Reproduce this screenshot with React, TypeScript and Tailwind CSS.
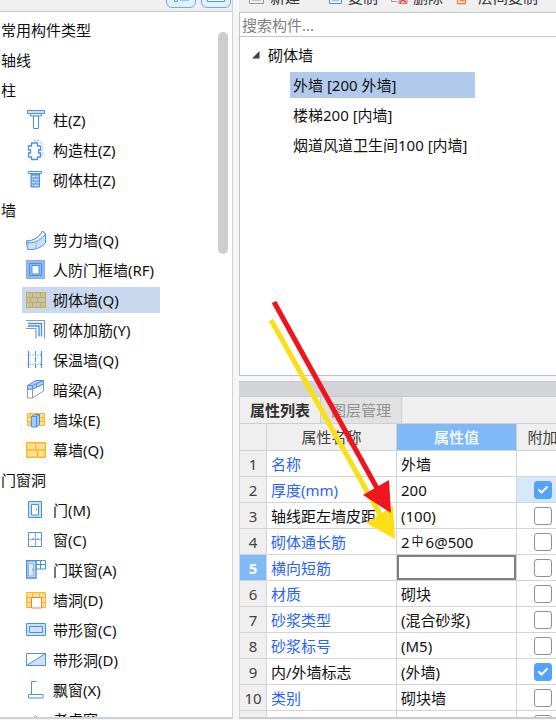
import { Check } from 'lucide-react'
import clsx from 'clsx'
import { Fragment, ReactNode, useState } from 'react'

const BLUE = '#4a90e2'
const PALE = '#cfe1f7'
const GOLD = '#fbb62a'
const SAND = '#ffdf94'

const icons: Record<string, ReactNode> = {
  column: (
    <g fill="#fff" stroke={BLUE}>
      <path d="M1.500 .5h17v3h-17z" fill={PALE} />
      <path d="M4.500 3.500h11v2.500h-11z" />
      <path d="M7.500 6h5v12.500h-5z" />
    </g>
  ),
  tieColumn: (
    <g fill="none" stroke={BLUE}>
      <path
        d="M8 .5h6v2.500h3v4l-1 2l1 2v4h-2"
        stroke="#9cc3f0"
        strokeDasharray="2 1"
      />
      <path
        d="M5.500 3h6v3h3v4h-2v3h2v4h-3v2.500h-6v-2.500h-3v-4h2v-3h-2v-4h3z"
        fill="#fff"
        strokeWidth="1.300"
      />
    </g>
  ),
  brickColumn: (
    <g stroke={BLUE}>
      <path d="M2.500 1.500h13v2h-13z" fill="#fff" />
      <path d="M5 4h8.500v13h-8.500z" fill="#7db0ec" />
      <path
        d="M6 6.500h3M10.500 6.500h2M6 9.500h1M8.500 9.500h4M6 12.500h3M10.500 12.500h2M6 15.500h1M8.500 15.500h4"
        stroke="#d5e6fa"
      />
    </g>
  ),
  shearWall: (
    <g stroke={BLUE} strokeLinejoin="round">
      <path d="M.5 11C8 11 13 7 16.500 1L19.500 4v9C15 18 9 20 1.500 19.500z" fill={PALE} />
      <path d="M.5 11C8 11 13 7 16.500 1L19.500 4C16 9.500 9 13 2 13z" fill="#eef5fd" />
      <path d="M2 13v6.500M10 11v7.500" fill="none" stroke="#8bb6ea" />
    </g>
  ),
  frameWall: (
    <g>
      <path d="M.5 .5h18v18h-18z" fill="#8fbbf2" stroke="#80b0ec" />
      <path d="M3.500 3.500h12v12h-12z" fill="#8fbbf2" stroke={BLUE} />
      <path d="M6 5.500h7v8.500h-7z" fill="#fff" stroke={BLUE} />
    </g>
  ),
  brickWall: (
    <g fill="#bfc4ae" stroke="#caa748">
      <path d="M.5 2.500h19v15h-19z" />
      <path
        d="M0 7.500h20M0 12.500h20M6.500 2.500v5M14.500 2.500v5M4.500 7.500v5M11.500 7.500v5M6.500 12.500v5M14.500 12.500v5"
        fill="none"
      />
    </g>
  ),
  wallRebar: (
    <g fill="none">
      <path d="M0 .5h18.500v18M0 8.500h10v10" stroke="#8f979f" strokeWidth="1.200" />
      <path d="M2 3.500h13.500v13M2 6h11v10.500" stroke={BLUE} strokeWidth="1.400" />
    </g>
  ),
  insulation: (
    <g fill="none" stroke={BLUE}>
      <path d="M2.500 1v17M15.500 1v17" strokeWidth="1.200" />
      <path d="M9.500 1v17" strokeDasharray="5 1" />
      <path d="M4 5h11M4 14.500h11" strokeDasharray="1 1.500" />
    </g>
  ),
  beam: (
    <g strokeLinejoin="round">
      <path d="M1.500 9v9h5L17.500 11V4L6.500 9z" fill="#fff" stroke="#8f979f" />
      <path d="M6.500 9v9" stroke="#8f979f" />
      <path d="M1.500 5.500L10 .5h7.500V4L6.500 9h-5z" fill="#b5d3f7" stroke={BLUE} />
      <path d="M1.500 5.500h5L17.500 .5M6.500 5.500V9M10.500 4v3" fill="none" stroke={BLUE} />
    </g>
  ),
  pier: (
    <g>
      <path d="M1.500 3.500h17v12h-17z" fill={SAND} stroke={GOLD} />
      <path d="M1.500 7.500h17M1.500 11.500h17M4 3.500v4M16 7.500v4M4 11.500v4" stroke={GOLD} />
      <path d="M5.500 6.500l3-2h5v10l-3 2.500h-5z" fill="#a9cbf5" stroke={BLUE} />
      <path d="M5.500 6.500h5v10.500M10.500 6.500l3-2" fill="none" stroke={BLUE} />
    </g>
  ),
  curtainWall: (
    <g fill={SAND} stroke={GOLD} strokeWidth="1.400">
      <path d="M.7 2.700h18.600v14.600h-18.600z" />
      <path d="M0 10h20M9.500 2.700v7.300M11.500 10v7.300" fill="none" />
    </g>
  ),
  door: (
    <g stroke={BLUE}>
      <path d="M2.500 1.500h13v16h-13z" fill={PALE} />
      <path d="M5.500 4.500h7v10.500h-7z" fill="#fff" />
      <path d="M10.500 8.500v2" />
    </g>
  ),
  window: (
    <g stroke={BLUE} fill="#fff">
      <path d="M2.500 2.500h13v14h-13z" />
      <path d="M9.500 2.500v14M2.500 9.500h13" stroke="#7fb1ed" />
      <path d="M7 8v2M12 8v2" />
    </g>
  ),
  doorWindow: (
    <g stroke={BLUE}>
      <path d="M10 .5h9.500v8.500h-9.500z" fill="#fff" />
      <path d="M14.500 .5v8.500M10 4.500h9.500" />
      <path d="M.7 .7h9.300v17.300h-9.300z" fill={PALE} strokeWidth="1.400" />
      <path d="M2.500 3.500h5v12.500h-5z" fill="#dfebfa" stroke="#8bb6ea" />
      <path d="M7 8.500v2" />
    </g>
  ),
  wallHole: (
    <g>
      <path d="M.5 2.500h19v15h-19z" fill={SAND} stroke={GOLD} />
      <path d="M0 7.500h20M0 12.500h20M6.500 2.500v5M13.500 2.500v5" stroke={GOLD} />
      <path d="M5.500 7.500h10v10.500h-10z" fill="#fff" stroke="#ee8240" />
    </g>
  ),
  stripWindow: (
    <g stroke={BLUE}>
      <path d="M.5 3.500h19v12h-19z" fill={PALE} />
      <path d="M3.500 6.500h13v6h-13z" fill={PALE} />
    </g>
  ),
  stripHole: (
    <g stroke={BLUE}>
      <path d="M.5 3.500h19v12h-19z" fill="#fff" />
      <path d="M.5 15.500L19.500 3.500v12z" fill={PALE} />
    </g>
  ),
  bayWindow: (
    <g fill="none" stroke={BLUE}>
      <path d="M10.500 1.500h-5v12.500" />
      <path d="M2.500 14.500h14.500v3.500h-14.500z" />
    </g>
  ),
  dormer: (
    <g fill="none" stroke="#9aa1a8">
      <path d="M1.500 14L9.500 5.500l8 8.500M4.500 14l5-5l5 5" />
    </g>
  )
}

const groups = [
  { title: '常用构件类型', items: [] },
  { title: '轴线', items: [] },
  {
    title: '柱',
    items: [
      ['column', '柱(Z)'],
      ['tieColumn', '构造柱(Z)'],
      ['brickColumn', '砌体柱(Z)']
    ]
  },
  {
    title: '墙',
    items: [
      ['shearWall', '剪力墙(Q)'],
      ['frameWall', '人防门框墙(RF)'],
      ['brickWall', '砌体墙(Q)'],
      ['wallRebar', '砌体加筋(Y)'],
      ['insulation', '保温墙(Q)'],
      ['beam', '暗梁(A)'],
      ['pier', '墙垛(E)'],
      ['curtainWall', '幕墙(Q)']
    ]
  },
  {
    title: '门窗洞',
    items: [
      ['door', '门(M)'],
      ['window', '窗(C)'],
      ['doorWindow', '门联窗(A)'],
      ['wallHole', '墙洞(D)'],
      ['stripWindow', '带形窗(C)'],
      ['stripHole', '带形洞(D)'],
      ['bayWindow', '飘窗(X)'],
      ['dormer', '老虎窗']
    ]
  }
]

const components = ['外墙 [200 外墙]', '楼梯200 [内墙]', '烟道风道卫生间100 [内墙]']

type Row = { name: string; value: ReactNode; blue?: boolean; check?: boolean }

// the rebar grade mark is set smaller and raised, as in the steel notation
const rebar = (
  <>
    2<span className="mx-0.5 align-[2px] text-xs leading-none">中</span>6@500
  </>
)

const rows: Row[] = [
  { name: '名称', value: '外墙', blue: true },
  { name: '厚度(mm)', value: '200', blue: true, check: true },
  { name: '轴线距左墙皮距离', value: '(100)', check: false },
  { name: '砌体通长筋', value: rebar, blue: true, check: false },
  { name: '横向短筋', value: '', blue: true, check: false },
  { name: '材质', value: '砌块', blue: true, check: false },
  { name: '砂浆类型', value: '(混合砂浆)', blue: true, check: false },
  { name: '砂浆标号', value: '(M5)', blue: true, check: false },
  { name: '内/外墙标志', value: '(外墙)', check: true },
  { name: '类别', value: '砌块墙', blue: true, check: false },
  { name: '', value: '', check: false }
]

function Sidebar() {
  const [selected, setSelected] = useState('砌体墙(Q)')

  return (
    <aside className="relative flex w-[233px] shrink-0 flex-col border-r border-b-2 border-[#cfd1d6] bg-white">
      <div className="flex h-3 shrink-0 items-end justify-end gap-[5px] overflow-hidden border-b border-[#c9cacd] bg-[#efefef] pr-px pb-[3px]">
        <button
          aria-label="列表"
          className="flex h-6 w-[30px] shrink-0 items-end justify-center rounded-md border border-[#64abf5] bg-[#e4f0fd] pb-1"
        >
          <svg width="18" height="16" fill="none" stroke="#4a9bf0">
            <path d="M2.500 3.500h3v3h-3zM2.500 11.500h3v3h-3zM8 5h9M8 13h9" />
          </svg>
        </button>
        <button
          aria-label="图标"
          className="flex h-6 w-[30px] shrink-0 items-end justify-center rounded-md border border-[#64abf5] bg-[#e4f0fd] pb-1"
        >
          <svg width="20" height="16" fill="#fff" stroke="#4a9bf0">
            <path d="M1.500 1.500h17v13h-17z" />
          </svg>
        </button>
      </div>
      <ul className="min-h-0 flex-1 overflow-hidden pt-[3px]">
        {groups.map(({ title, items }) => (
          <Fragment key={title}>
            <li className="h-[30px] pl-px leading-[30px]">{title}</li>
            {items.map(([icon, label]) => (
              <li key={label} className="flex h-[30px] items-center pl-[22px]">
                <button
                  onClick={() => setSelected(label)}
                  className={clsx(
                    'flex h-[26px] w-[138px] items-center gap-[7px] pl-1 whitespace-nowrap',
                    selected === label && 'bg-[#c8d8ef]'
                  )}
                >
                  <svg viewBox="0 0 20 20" className="size-5 shrink-0 overflow-visible">
                    {icons[icon]}
                  </svg>
                  {label}
                </button>
              </li>
            ))}
          </Fragment>
        ))}
      </ul>
      <div className="absolute top-8 right-1 h-[222px] w-2.5 rounded-full bg-[#cdcdcd]" />
    </aside>
  )
}

function ToolButton({ label, children }: { label: string; children: ReactNode }) {
  return (
    <button className="flex h-[30px] shrink-0 items-center gap-[5px] whitespace-nowrap">
      <svg width="18" height="18" fill="none" className="overflow-visible">
        {children}
      </svg>
      {label}
    </button>
  )
}

function Toolbar() {
  return (
    <div className="flex h-[13px] shrink-0 items-end gap-3 overflow-hidden border-b border-[#c4c6cc] bg-[#efefef] pl-2 text-[#333]">
      <ToolButton label="新建">
        <path d="M2.500 2.500h14v13h-14zM5 12h9" stroke="#8f979f" />
      </ToolButton>
      <span className="w-px shrink-0" />
      <ToolButton label="复制">
        <path d="M4.500 2.500h12v13h-12zM7 9h7M7 12h7M4 5h-3v7" stroke={BLUE} />
      </ToolButton>
      <ToolButton label="删除">
        <path d="M7 13.500H1.500v-11h10" stroke="#8f979f" />
        <path d="M9 7.500h8v8h-8z" fill="#f8dede" stroke="#e06a6a" />
        <path d="M10 8.500l6 6M16 8.500l-6 6" stroke="#dc3c3c" strokeWidth="1.500" />
      </ToolButton>
      <ToolButton label="层间复制">
        <path d="M2.500 4v11.500h8v-4M5.500 4v8.500h4" stroke="#ee8240" strokeWidth="1.300" />
      </ToolButton>
    </div>
  )
}

function ComponentTree() {
  const [active, setActive] = useState(components[0])

  return (
    <div className="h-[339px] shrink-0 border-b border-l border-[#bcbec2] bg-white pt-[3px]">
      <div className="flex h-[30px] items-center gap-2 pl-3">
        <svg width="8" height="8">
          <path d="M7.500 0v7.500h-7.500z" fill="#404040" />
        </svg>
        砌体墙
      </div>
      {components.map((name) => (
        <div key={name} className="flex h-[30px] items-center pl-[50px]">
          <button
            onClick={() => setActive(name)}
            className={clsx(
              'h-[26px] w-[185px] pl-[3px] text-left whitespace-nowrap',
              active === name && 'bg-[#b1caeb]'
            )}
          >
            {name}
          </button>
        </div>
      ))}
    </div>
  )
}

function PropertyTable() {
  const [current, setCurrent] = useState(4)

  return (
    <table className="w-[329px] table-fixed border-collapse bg-white">
      <colgroup>
        <col className="w-[27px]" />
        <col className="w-[130px]" />
        <col className="w-[120px]" />
        <col className="w-[52px]" />
      </colgroup>
      <thead>
        <tr className="h-[27px] bg-[#efefef] text-[#404040]">
          <th className="border border-[#cfcfcf]" />
          <th className="border border-[#cfcfcf] p-0 font-normal">属性名称</th>
          <th className="border border-[#cfcfcf] bg-[#80b9f8] p-0 font-medium text-white">属性值</th>
          <th className="border border-[#cfcfcf] p-0 font-normal">附加</th>
        </tr>
      </thead>
      <tbody>
        {rows.map(({ name, value, blue, check }, index) => (
          <tr key={index} className="h-[26px]" onClick={() => setCurrent(index)}>
            <td
              className={clsx(
                'border border-[#d4d4d4] p-0 text-center',
                current === index ? 'bg-[#80b9f8] font-bold text-white' : 'bg-[#efefef] text-[#404040]'
              )}
            >
              {index + 1}
            </td>
            <td
              className={clsx(
                'overflow-hidden border border-[#d4d4d4] py-0 pr-4 pl-1 whitespace-nowrap',
                blue && 'text-[#2b62f5]'
              )}
            >
              <div className="overflow-hidden">{name}</div>
            </td>
            <td className="border border-[#d4d4d4] p-0">
              {index === 4 ? (
                <input
                  aria-label={name}
                  className="block h-[25px] w-full border-2 border-[#808080] px-0.5 outline-none"
                />
              ) : (
                <div className="pl-1">{value}</div>
              )}
            </td>
            <td className={clsx('border border-[#d4d4d4] p-0', index === 1 && 'bg-[#d6e9fc]')}>
              {check !== undefined && (
                <label className="relative flex items-center justify-center">
                  <input
                    type="checkbox"
                    aria-label={`${name} 附加`}
                    defaultChecked={check}
                    className="peer size-[18px] appearance-none rounded-[3px] border border-[#909090] bg-white checked:border-[#55a3f8] checked:bg-[#55a3f8]"
                  />
                  <Check
                    className="pointer-events-none absolute hidden size-3 text-white peer-checked:block"
                    strokeWidth={4}
                  />
                </label>
              )}
            </td>
          </tr>
        ))}
      </tbody>
    </table>
  )
}

export default function App() {
  return (
    <div className="relative flex h-screen gap-1.5 overflow-hidden bg-[#f5f6f8] pb-px font-['Noto_Sans','Noto_Sans_CJK_SC',sans-serif] text-[15px] leading-5 text-[#101010]">
      <Sidebar />
      <main className="flex min-w-0 flex-1 flex-col overflow-hidden">
        <Toolbar />
        <input
          type="search"
          aria-label="搜索构件"
          placeholder="搜索构件..."
          className="h-6 shrink-0 border-b border-l border-[#c4c6cc] bg-white px-0.5 outline-none placeholder:text-[#808080]"
        />
        <ComponentTree />
        <section className="mt-[5px] flex min-h-0 flex-1 flex-col overflow-hidden border-b-2 border-[#c9cbd0] bg-[#efefef]">
          <div className="h-4 shrink-0 border-y border-[#c6c8ce] bg-[#d2d4da]" />
          <div role="tablist" className="flex h-[26px] shrink-0">
            <button role="tab" aria-selected="true" className="w-[82px] border-x border-[#cfcfcf] font-bold text-[#303030]">
              属性列表
            </button>
            <button role="tab" aria-selected="false" className="w-[81px] border-r border-[#cfcfcf] bg-[#e1e1e1] text-[#909090]">
              图层管理
            </button>
          </div>
          <PropertyTable />
        </section>
      </main>
      {/* callout arrows over the property grid */}
      <svg className="pointer-events-none absolute top-0 left-0" width="556" height="720">
        <path d="M271 320L382 518" stroke="#fadf14" strokeWidth="5" />
        <path d="M395 539L366 523L393 506z" fill="#fadf14" />
        <path d="M274 302L378 490" stroke="#ee151c" strokeWidth="5" />
        <path d="M391 513L363 495L389 480z" fill="#ee151c" />
      </svg>
    </div>
  )
}
